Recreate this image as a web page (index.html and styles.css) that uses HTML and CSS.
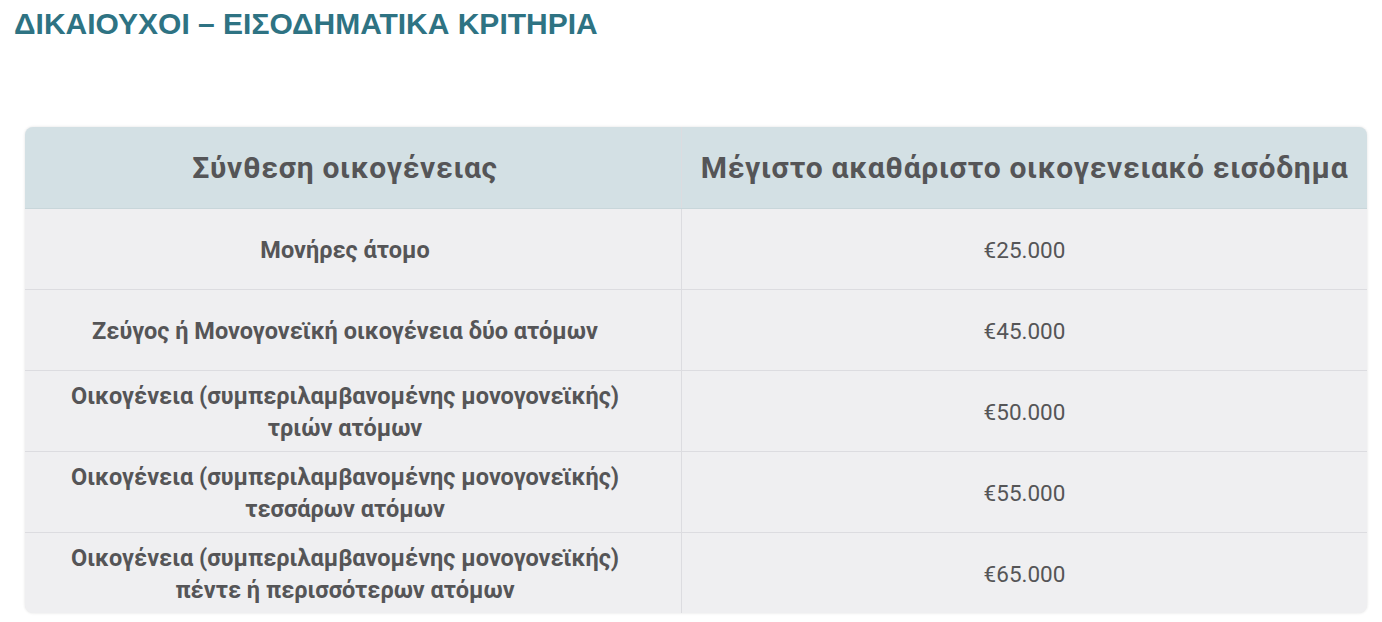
FILE: index.html
```html
<!DOCTYPE html>
<html lang="el">
<head>
<meta charset="utf-8">
<link rel="stylesheet" href="styles.css">
</head>
<body>
<h1 class="title">ΔΙΚΑΙΟΥΧΟΙ – ΕΙΣΟΔΗΜΑΤΙΚΑ ΚΡΙΤΗΡΙΑ</h1>
<div class="card">
  <table class="criteria">
    <thead>
      <tr><th class="h-family">Σύνθεση οικογένειας</th><th>Μέγιστο ακαθάριστο οικογενειακό εισόδημα</th></tr>
    </thead>
    <tbody>
      <tr><td class="label">Μονήρες άτομο</td><td class="amount">€25.000</td></tr>
      <tr><td class="label">Ζεύγος ή Μονογονεϊκή οικογένεια δύο ατόμων</td><td class="amount">€45.000</td></tr>
      <tr><td class="label">Οικογένεια (συμπεριλαμβανομένης μονογονεϊκής)<br>τριών ατόμων</td><td class="amount">€50.000</td></tr>
      <tr><td class="label">Οικογένεια (συμπεριλαμβανομένης μονογονεϊκής)<br>τεσσάρων ατόμων</td><td class="amount">€55.000</td></tr>
      <tr><td class="label">Οικογένεια (συμπεριλαμβανομένης μονογονεϊκής)<br>πέντε ή περισσότερων ατόμων</td><td class="amount">€65.000</td></tr>
    </tbody>
  </table>
</div>
</body>
</html>
```

FILE: styles.css
```css
html, body { margin: 0; padding: 0; background: #ffffff; }
body { width: 1382px; height: 622px; overflow: hidden; }
.title {
  margin: 0;
  padding: 7px 0 0 14px;
  font-family: "Liberation Sans", Arial, sans-serif;
  font-weight: bold;
  font-size: 30px;
  line-height: 34px;
  color: #2e7383;
}
.card {
  margin: 86px 15px 0 25px;
  border-radius: 8px;
  overflow: hidden;
  background: #efeff1;
  box-shadow: 0 0 3px rgba(0,0,0,0.12);
}
.criteria {
  width: 100%;
  border-collapse: collapse;
  font-family: Roboto, "Noto Sans", sans-serif;
  color: #555557;
  table-layout: fixed;
}
.criteria th {
  height: 81px;
  background: #d3e0e4;
  font-size: 30px;
  font-weight: bold;
  padding: 0;
  text-align: center;
  border-bottom: 1px solid #c8d6da;
  letter-spacing: 0.7px;
}
.criteria th:first-child, .criteria td:first-child { border-right: 1px solid #dcdce0; }
.criteria th.h-family { width: 640px; padding-right: 16px; }
.criteria td {
  height: 78px;
  text-align: center;
  padding: 2px 0 0 0;
  font-size: 23.5px;
  line-height: 32px;
  border-top: 1px solid #dcdce0;
}
.criteria tbody tr:first-child td { border-top: none; }
.criteria td.label { font-weight: bold; padding-right: 16px; }
.criteria td.amount { font-weight: normal; font-size: 22.5px; }
```
